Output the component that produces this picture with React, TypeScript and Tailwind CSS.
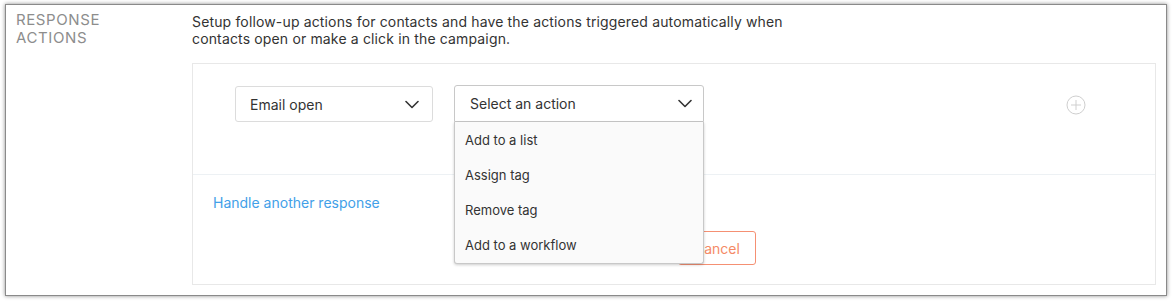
import React from "react";

function Chevron({ className = "" }: { className?: string }) {
  return (
    <svg className={className} width="14" height="9" viewBox="0 0 14 9" fill="none">
      <path d="M1 1.5 L7 7.5 L13 1.5" stroke="#333" strokeWidth="1.6" strokeLinecap="round" strokeLinejoin="round" />
    </svg>
  );
}

export default function App() {
  return (
    <div className="w-[1172px] h-[301px] bg-white pt-[4px] pl-[5px]" style={{ fontFamily: 'Inter, Lato, sans-serif' }}>
      <div className="w-[1162px] h-[292px] border border-[#8a8a8a] shadow-[0_0_4px_rgba(0,0,0,0.45)] bg-white flex">
        <div className="w-[186px] shrink-0 pl-[10px] pt-[6px] text-[15px] leading-[18px] tracking-[0.6px] text-[#8d8d8d]">
          RESPONSE
          <br />
          ACTIONS
        </div>
        <div className="flex-1 pr-[10px] flex flex-col">
          <p className="pt-[8px] text-[14px] leading-[17px] tracking-[0.15px] text-[#333]">
            Setup follow-up actions for contacts and have the actions triggered automatically when
            <br />
            contacts open or make a click in the campaign.
          </p>
          <div className="mt-[16px] border border-[#e8e8e8] h-[222px] flex flex-col">
            <div className="h-[111px] shrink-0 border-b border-[#edf1f4] flex items-start pl-[42px] pt-[21px] relative">
              <div className="mt-[1px] w-[198px] h-[36px] border border-[#dcdcdc] rounded-[3px] flex items-center justify-between pl-[14px] pr-[13px] text-[14px] text-[#333]">
                <span>Email open</span>
                <Chevron />
              </div>
              <div className="ml-[21px] relative">
                <div className="w-[250px] h-[37px] border border-[#c8c8c8] rounded-t-[3px] flex items-center justify-between pl-[15px] pr-[11px] text-[14px] text-[#333] bg-white">
                  <span>Select an action</span>
                  <Chevron />
                </div>
                <div className="absolute left-0 top-[37px] w-[250px] bg-[#fafafa] border border-t-0 border-[#c8c8c8] rounded-b-[3px] shadow-[0_1px_3px_rgba(0,0,0,0.2)] z-10 text-[13px] text-[#333] pt-[1px]">
                  {["Add to a list", "Assign tag", "Remove tag", "Add to a workflow"].map((t) => (
                    <div key={t} className="h-[35px] flex items-center pl-[10px]">
                      {t}
                    </div>
                  ))}
                </div>
              </div>
              <div className="ml-auto mr-[69px] mt-[10px]">
                <svg width="20" height="20" viewBox="0 0 20 20" fill="none">
                  <circle cx="10" cy="10" r="9" stroke="#cfcfcf" strokeWidth="1" />
                  <path d="M10 5 V15 M5 10 H15" stroke="#cfcfcf" strokeWidth="1" />
                </svg>
              </div>
            </div>
            <div className="flex-1 pl-[20px] pt-[19px] relative">
              <div className="text-[14px] text-[#42a0e8] leading-[18px]">Handle another response</div>
              <div className="absolute left-[485px] top-[56px] w-[78px] h-[34px] border border-[#f59073] rounded-[3px] flex items-center pl-[15px] text-[14px] text-[#f58a66]">
                Cancel
              </div>
            </div>
          </div>
        </div>
      </div>
    </div>
  );
}
